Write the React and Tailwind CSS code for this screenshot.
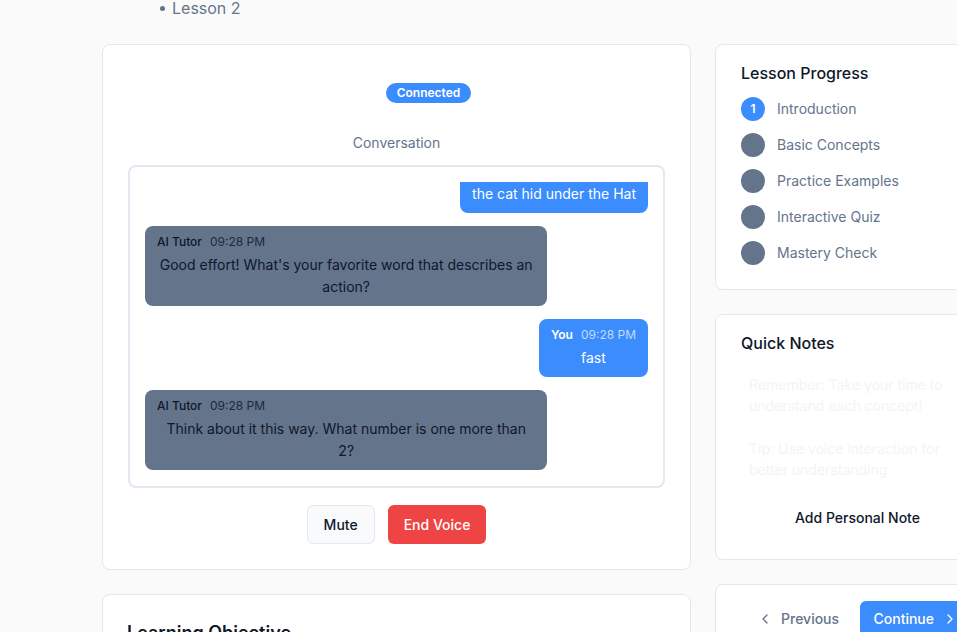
import React from "react";

function ChevronLeft({ className }) {
  return (
    <svg className={className} viewBox="0 0 24 24" fill="none" stroke="currentColor" strokeWidth="2" strokeLinecap="round" strokeLinejoin="round">
      <path d="m15 18-6-6 6-6" />
    </svg>
  );
}
function ChevronRight({ className }) {
  return (
    <svg className={className} viewBox="0 0 24 24" fill="none" stroke="currentColor" strokeWidth="2" strokeLinecap="round" strokeLinejoin="round">
      <path d="m9 18 6-6-6-6" />
    </svg>
  );
}

function AiBubble({ text }) {
  return (
    <div className="self-start w-[80%] rounded-lg bg-[#64748b] px-3 py-2">
      <div className="flex items-center gap-2 text-xs leading-4">
        <span className="font-medium text-[#0f172a]">AI Tutor</span>
        <span className="text-[#1e293b]">09:28 PM</span>
      </div>
      <p className="mt-1 text-center text-sm leading-[22px] text-[#0f172a]">{text}</p>
    </div>
  );
}

function UserBubble({ text }) {
  return (
    <div className="self-end max-w-[80%] rounded-lg bg-[#3b8cfd] px-3 py-2">
      <div className="flex items-center gap-2 text-xs leading-4">
        <span className="font-semibold text-white">You</span>
        <span className="text-white/70">09:28 PM</span>
      </div>
      <p className="mt-1 text-center text-sm leading-[22px] text-white">{text}</p>
    </div>
  );
}

const steps = ["Introduction", "Basic Concepts", "Practice Examples", "Interactive Quiz", "Mastery Check"];

export default function App() {
  return (
    <div className="w-[957px] h-[632px] overflow-hidden bg-[#fafafa] font-['Inter',sans-serif]">
      <div className="-mt-[4px] pl-[102px]">
        <div className="flex items-center h-6 pl-[58px] text-base text-[#64748b]">
          <span className="w-[5px] h-[5px] rounded-full bg-[#64748b] mr-[7px]" />
          <span>Lesson 2</span>
        </div>
        <div className="mt-6 flex gap-6 items-start">
          {/* Left column */}
          <div className="w-[589px] shrink-0 flex flex-col gap-6">
            <div className="rounded-lg border border-[#e2e8f0] bg-white px-[25px] pt-[38px] pb-[25px]">
              <div className="flex justify-center">
                <span className="ml-16 inline-flex h-5 items-center rounded-full bg-[#3b8cfd] px-[11px] text-xs font-semibold text-white">
                  Connected
                </span>
              </div>
              <div className="mt-[30px] text-center text-sm leading-5 text-[#64748b]">Conversation</div>
              <div className="mt-3 rounded-lg border-2 border-[#e2e8f0] p-[15px]">
                <div className="h-[289px] overflow-hidden flex flex-col justify-end gap-[13px] pb-px">
                  <UserBubble text="the cat hid under the Hat" />
                  <AiBubble text="Good effort! What's your favorite word that describes an action?" />
                  <UserBubble text="fast" />
                  <AiBubble text="Think about it this way. What number is one more than 2?" />
                </div>
              </div>
              <div className="mt-[17px] flex justify-center gap-[13px]">
                <button className="h-[39px] rounded-md border border-[#e2e8f0] bg-[#f8fafc] px-4 text-sm font-medium text-[#0f172a]">
                  Mute
                </button>
                <button className="h-[39px] rounded-md bg-[#ef4444] px-4 text-sm font-medium text-white">
                  End Voice
                </button>
              </div>
            </div>
            <div className="rounded-lg border border-[#e2e8f0] bg-white px-6 pt-6 pb-6">
              <h2 className="text-lg font-semibold text-[#0f172a]">Learning Objective</h2>
            </div>
          </div>

          {/* Right column */}
          <div className="w-[285px] shrink-0 flex flex-col gap-6">
            <div className="rounded-lg border border-[#e2e8f0] bg-white px-[25px] pt-4 pb-6">
              <h3 className="text-base leading-6 font-medium text-[#0f172a]">Lesson Progress</h3>
              <div className="mt-3 flex flex-col gap-3">
                {steps.map((s, i) => (
                  <div key={s} className="flex items-center gap-3">
                    {i === 0 ? (
                      <span className="flex h-6 w-6 items-center justify-center rounded-full bg-[#3b8cfd] text-xs font-semibold text-white">1</span>
                    ) : (
                      <span className="h-6 w-6 rounded-full bg-[#64748b]" />
                    )}
                    <span className="text-sm text-[#64748b]">{s}</span>
                  </div>
                ))}
              </div>
            </div>

            <div className="rounded-lg border border-[#e2e8f0] bg-white px-[25px] pt-4 pb-[26px]">
              <h3 className="text-base leading-6 font-medium text-[#0f172a]">Quick Notes</h3>
              <div className="mt-[19px] flex flex-col gap-[22px] px-2 text-sm leading-[21px] text-[#f1f5f9]">
                <p>Remember: Take your time to understand each concept!</p>
                <p>Tip: Use voice interaction for better understanding</p>
              </div>
              <div className="mt-[23px] flex justify-center">
                <button className="h-[30px] text-sm font-medium text-[#0f172a]">Add Personal Note</button>
              </div>
            </div>

            <div className="rounded-lg border border-[#e2e8f0] bg-white px-[25px] pt-4 pb-6">
              <div className="flex items-center justify-between">
                <button className="flex h-9 items-center gap-2 px-4 text-sm font-medium text-[#64748b]">
                  <ChevronLeft className="h-4 w-4" />
                  Previous
                </button>
                <button className="flex h-9 items-center gap-2 rounded-md bg-[#3b8cfd] pl-[13px] pr-4 text-sm font-medium text-white">
                  Continue
                  <ChevronRight className="h-4 w-4" />
                </button>
              </div>
            </div>
          </div>
        </div>
      </div>
    </div>
  );
}
